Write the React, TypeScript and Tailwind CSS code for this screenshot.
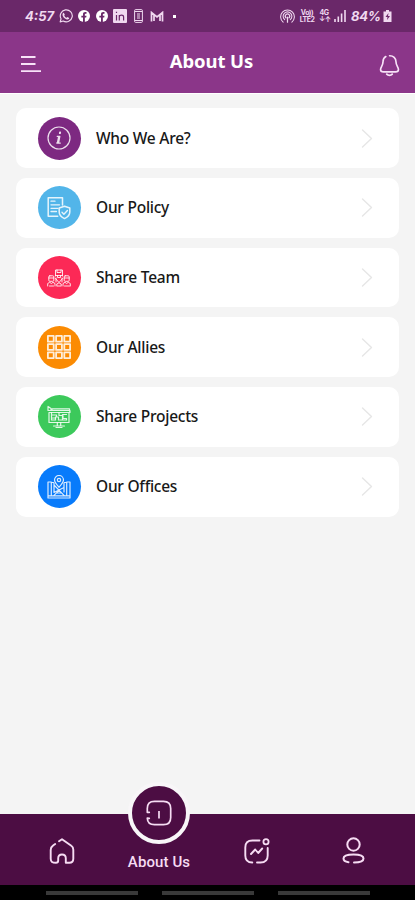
import type { ReactNode } from "react";

const Svg = ({
  className,
  viewBox = "0 0 24 24",
  children,
}: {
  className: string;
  viewBox?: string;
  children: ReactNode;
}) => (
  <svg
    className={className}
    viewBox={viewBox}
    fill="none"
    stroke="currentColor"
    strokeLinecap="round"
    strokeLinejoin="round"
  >
    {children}
  </svg>
);

const InfoIcon = () => (
  <Svg className="size-6">
    <circle cx="12" cy="12" r="11" strokeWidth="1.2" />
    <path d="M12.8 6.2h.6l-.2 1.2h-.6z" strokeWidth="1.4" />
    <path d="M10.2 10.3h2.6l-1.3 6.8h1.8M9.8 17h1.5M11.7 10.6l-1.2 6" strokeWidth="1.3" />
  </Svg>
);

const PolicyIcon = () => (
  <Svg className="size-6">
    <path d="M15.5 9V1.7H1.2v18.6h9.5" strokeWidth="1.5" />
    <path d="M4 5.2h4M4 8.8h8.5M4 12.3h7M4 15.5h5.5" strokeWidth="1.3" />
    <path d="M17.5 10.2l5.3 1.8v4c0 3.2-2.2 5.2-5.3 6.6-3.1-1.4-5.3-3.4-5.3-6.6v-4z" strokeWidth="1.5" />
    <path d="M15 16.3l1.9 1.9 3.500-3.700" strokeWidth="1.4" />
  </Svg>
);

const TeamIcon = () => (
  <Svg className="size-6">
    <g strokeWidth="1">
      <path d="M8.500 10V4h7v6M10 4v2.500h4V4M8.500 9.500h7M10.500 9.500v2h3v-2" />
      <rect x="1.800" y="9.800" width="5" height="5.500" rx="1" />
      <rect x="17.200" y="9.800" width="5" height="5.500" rx="1" />
      <path d="M1.800 12h5M17.200 12h5M8.500 12.500l3.500 4 3.500-4M9 12v4M15 12v4" />
      <path d="M.7 20v-2.500l2-1.200 1.700 1.200L6 16.300l2 1.200V20M16 20v-2.500l2-1.200 1.600 1.200 1.700-1.200 2 1.200V20M9.800 20v-2l2.200-1.200 2.200 1.200v2" />
      <path d="M2.500 20h4M10.500 20h3M17.500 20h5" />
    </g>
  </Svg>
);

const AlliesIcon = () => (
  <Svg className="size-6">
    {[0.9, 9.1, 17.3].map((y) =>
      [0.9, 9.1, 17.3].map((x) => (
        <rect key={`${x}-${y}`} x={x} y={y} width="5.800" height="5.800" strokeWidth="1.800" />
      ))
    )}
  </Svg>
);

const ProjectsIcon = () => (
  <Svg className="size-6">
    <g strokeWidth="1.200">
      <path d="M1 1.500v4h22v2H2v10h20v-10M1 1.500l3 2v2M5 5V3.800h17.500V6" />
      <path d="M4.500 7.500V15h4v-3h3v3h4V9.500h4M4.500 10h5v2M12 7.500v3h4v3h3.500V15h-4" />
      <path d="M10.300 17.500v3M13.700 17.500v3M6.500 21h11M9 22.500h6M5.500 13h3" />
    </g>
  </Svg>
);

const OfficesIcon = () => (
  <Svg className="size-6">
    <g strokeWidth="1.200">
      <path d="M12 12.300C9 8.800 7.500 7.200 7.500 5a4.500 4.500 0 0 1 9 0c0 2.200-1.500 3.800-4.500 7.300z" />
      <circle cx="12" cy="5" r="1.700" />
      <path d="M6.500 7.500H4.300v13.300h15.400V7.500h-2.200M4.300 7H1v16h22V7h-3.300M1 20.800h3.300M19.700 20.800H23" />
      <path d="M7 8v9.500l10-5M7 10l10 10.300M7 20.300l5-5M17 8v9M10 18h4" />
    </g>
  </Svg>
);

const items = [
  { label: "Who We Are?", color: "bg-[#7d2981]", icon: <InfoIcon /> },
  { label: "Our Policy", color: "bg-[#52b5e9]", icon: <PolicyIcon /> },
  { label: "Share Team", color: "bg-[#fc2956]", icon: <TeamIcon /> },
  { label: "Our Allies", color: "bg-[#fb8b03]", icon: <AlliesIcon /> },
  { label: "Share Projects", color: "bg-[#3cc95b]", icon: <ProjectsIcon /> },
  { label: "Our Offices", color: "bg-[#087bfb]", icon: <OfficesIcon /> },
];

const FacebookIcon = () => (
  <svg className="size-3" viewBox="0 0 24 24">
    <circle cx="12" cy="12" r="12" fill="currentColor" />
    <path d="M10 24v-9H6.700v-3.700H10V8.400C10 5 12 3.500 17 4.200v3.300c-2.500-.2-3.300.2-3.300 1.700v2.100H17l-.6 3.700h-2.700v9z" fill="#6a2869" />
  </svg>
);

const StatusBar = () => (
  <div className="flex h-8 items-center justify-between bg-[#6a2869] pl-[25px] pr-[23px] text-[#f0d9f0]">
    <div className="flex items-center">
      <span className="w-[33px] text-[13px] font-bold italic leading-none">4:57</span>
      <Svg className="ml-px size-3.5">
        <path d="M2 22l1.500-5.200A10.300 10.300 0 1 1 7.200 20.600z" strokeWidth="2" />
        <path d="M8 6.500l2 3-1 1.500c1 2 2 3 4 4l1.500-1.200 3 1.700c-.5 3-3 3-6 1.500-3-1.700-4.500-3.500-5.300-6C5.700 9 6.500 7 8 6.500z" fill="currentColor" stroke="none" />
      </Svg>
      <span className="ml-[5px] text-white"><FacebookIcon /></span>
      <span className="ml-[6px] text-white"><FacebookIcon /></span>
      <svg className="ml-[5px] size-3.5" viewBox="0 0 14 14">
        <rect width="14" height="14" rx="1" fill="currentColor" />
        <path d="M3.500 6v5.500M3.500 2.800v1.300M6.300 11.500V6M6.300 8c0-2.500 4.300-2.500 4.300 0v3.500" fill="none" stroke="#6a2869" strokeWidth="1.200" />
      </svg>
      <svg className="ml-[7px] h-3.5 w-[9px]" viewBox="0 0 9 14" fill="none" stroke="currentColor">
        <rect x=".6" y=".6" width="7.800" height="12.800" rx="1" />
        <path d="M1 2.500h7M1 11.500h7M3 5h3M3 7h3M3 9h3" />
      </svg>
      <svg className="ml-[7px] h-[11px] w-3.5" viewBox="0 0 14 11" fill="none" stroke="currentColor">
        <path d="M1.500 10.500v-9L7 6l5.500-4.500v9M4 10V4M10 10V4" strokeWidth="1.700" />
      </svg>
      <span className="ml-[9px] size-[3px] bg-white" />
    </div>
    <div className="flex items-center">
      <Svg className="size-[15px]">
        <path d="M5 21a11 11 0 1 1 14 0M7.500 17a7 7 0 1 1 9 0" strokeWidth="1.700" />
        <path d="M9.500 14a3.500 3.500 0 1 1 5 0M12 13v8" strokeWidth="2" />
      </Svg>
      <span className="ml-[4px] w-[16px] text-center text-[7px] font-bold leading-[7px] tracking-[-0.5px]">
        Vo)) LTE2
      </span>
      <span className="ml-[4px] w-[10px] text-center text-[7px] font-bold leading-[7px] tracking-[-0.5px]">
        4G ↓↑
      </span>
      <svg className="ml-[5px] h-3 w-3" viewBox="0 0 12 12" stroke="currentColor" strokeWidth="1.600">
        <path d="M1 12V9M4.300 12V6.500M7.600 12V3.500M11 12V0" />
      </svg>
      <span className="ml-[5px] w-[31px] text-[13px] font-bold italic leading-none tracking-[-0.3px]">84%</span>
      <svg className="ml-px h-3 w-[9px]" viewBox="0 0 9 12">
        <path d="M3 0h3v1.500h2.500V12H.5V1.500H3z" fill="currentColor" />
        <path d="M5.500 3L2.500 7h2l-.5 3 3-4h-2z" fill="#6a2869" />
      </svg>
    </div>
  </div>
);

const Header = () => (
  <header className="flex h-[62px] items-center justify-between border-b border-white bg-[#8b3689] pl-5 pr-[15px] text-[#f8e2f8]">
    <svg className="mt-0.5 h-[18px] w-[21px]" viewBox="0 0 21 18" stroke="currentColor" strokeWidth="1.800">
      <path d="M1 2h14.500M1 9h14.500M1 16.100h20" />
    </svg>
    <h1 className="ml-[3px] -mt-[3px] whitespace-nowrap font-['Noto_Sans','Open_Sans',sans-serif] text-[18.500px] font-bold tracking-[-0.1px] text-white">
      About Us
    </h1>
    <Svg className="mt-[6px] h-[23px] w-[21px]" viewBox="0 0 23 24">
      <path d="M7.500 2.200C5.400 3.400 4.400 5.400 4.400 8c0 4.200-2.700 5.700-2.700 8.300 0 2 1.500 2.700 3.300 2.700h13c2 0 3.300-.8 3.300-2.700 0-2.600-2.700-4-2.700-8.300 0-4.200-3-6.800-7-6.700" strokeWidth="1.800" />
      <path d="M8.500 21.500c1.500 1.700 4.500 1.700 6 0" strokeWidth="2" />
    </Svg>
  </header>
);

const BottomNav = () => (
  <nav className="grid h-[71px] grid-cols-[124px_70px_125px_96px] bg-[#4c0d43] text-[#f6dcf3]">
    <div className="flex items-center justify-center pt-0.5">
      <Svg className="size-[26px]" viewBox="0 0 26 26">
        <path d="M10 3.300l3-2.100 9.300 6.600c1.500 1 2 2.300 2 4v9c0 3-1.500 4-4 4h-3.500v-4.500c0-5-7.600-5-7.600 0v2.200c0 1.500-.8 2.300-2.300 2.300-3.500 0-5.200-1-5.200-4V12c0-2 .6-3.300 2.300-4.400L6.200 6" strokeWidth="1.900" />
      </Svg>
    </div>
    <div className="flex flex-col items-center">
      <div className="-mt-8 flex size-[62px] shrink-0 items-center justify-center rounded-full border-4 border-[#f8f6f8] bg-[#4c0d43]">
        <Svg className="size-[26px]" viewBox="0 0 26 26">
          <path d="M1.300 10V8.500c0-5 2.200-7.200 7.200-7.200h9c5 0 7.200 2.200 7.200 7.200v9c0 5-2.200 7.200-7.200 7.200h-9c-4.500 0-7-2-7.200-6.500l2 .2M1.300 9.500v2.800h2" strokeWidth="1.700" />
          <path d="M13 11v7.500" strokeWidth="1.700" strokeLinecap="butt" />
        </Svg>
      </div>
      <span className="mt-[8px] whitespace-nowrap font-['Roboto','Inter',sans-serif] text-[15px] font-medium leading-5 tracking-[0.1px]">
        About Us
      </span>
    </div>
    <div className="flex items-center justify-center pt-0.5">
      <Svg className="size-[26px]" viewBox="0 0 26 26">
        <path d="M15.500 2.500H8.500C3.500 2.500 1.300 4.700 1.300 9.500v8c0 4.800 2.200 7 7 7M13 24.500h3.500c5 0 7.200-2 7.200-7V10" strokeWidth="1.900" />
        <circle cx="22" cy="3.800" r="2.600" strokeWidth="1.800" />
        <path d="M7 16l4.200-4.500 3 3.500 4-4.500" strokeWidth="1.900" />
      </Svg>
    </div>
    <div className="flex items-center pl-[22.500px] pt-0.5">
      <Svg className="h-[27px] w-[23px]" viewBox="0 0 23 27">
        <circle cx="11.500" cy="7.500" r="6.200" strokeWidth="2" />
        <path d="M6.500 25.200c-3-.4-5-1.500-5-3.700 0-2.800 4.500-4 10-4s10 1.200 10 4c0 2.600-4 4-9.500 4" strokeWidth="2" />
      </Svg>
    </div>
  </nav>
);

export default function App() {
  return (
    <div className="flex h-[900px] w-[415px] flex-col overflow-hidden bg-[#f4f4f4] font-['Inter','Liberation_Sans',sans-serif]">
      <StatusBar />
      <Header />
      <main className="flex flex-1 flex-col gap-[10px] px-4 pt-[14.400px]">
        {items.map((item) => (
          <div
            key={item.label}
            className="flex h-[59.700px] items-center rounded-[10px] bg-white pl-[21.500px] pr-[26px]"
          >
            <div className={`flex size-[43px] items-center justify-center rounded-full text-white/85 ${item.color}`}>
              {item.icon}
            </div>
            <span className="ml-[15.500px] flex-1 font-['Noto_Sans','Open_Sans',sans-serif] text-[15.500px] font-medium tracking-[-0.250px] text-[#181818]">
              {item.label}
            </span>
            <Svg className="h-[19px] w-3 text-[#e6e6e6]" viewBox="0 0 12 19">
              <path d="M1.500 1l9 8.500-9 8.500" strokeWidth="1.400" />
            </Svg>
          </div>
        ))}
      </main>
      <BottomNav />
      <div className="flex h-[15px] items-center justify-center gap-6 bg-black">
        <span className="h-1 w-[92px] bg-[#393939]" />
        <span className="h-1 w-[92px] bg-[#393939]" />
        <span className="h-1 w-[92px] bg-[#393939]" />
      </div>
    </div>
  );
}
